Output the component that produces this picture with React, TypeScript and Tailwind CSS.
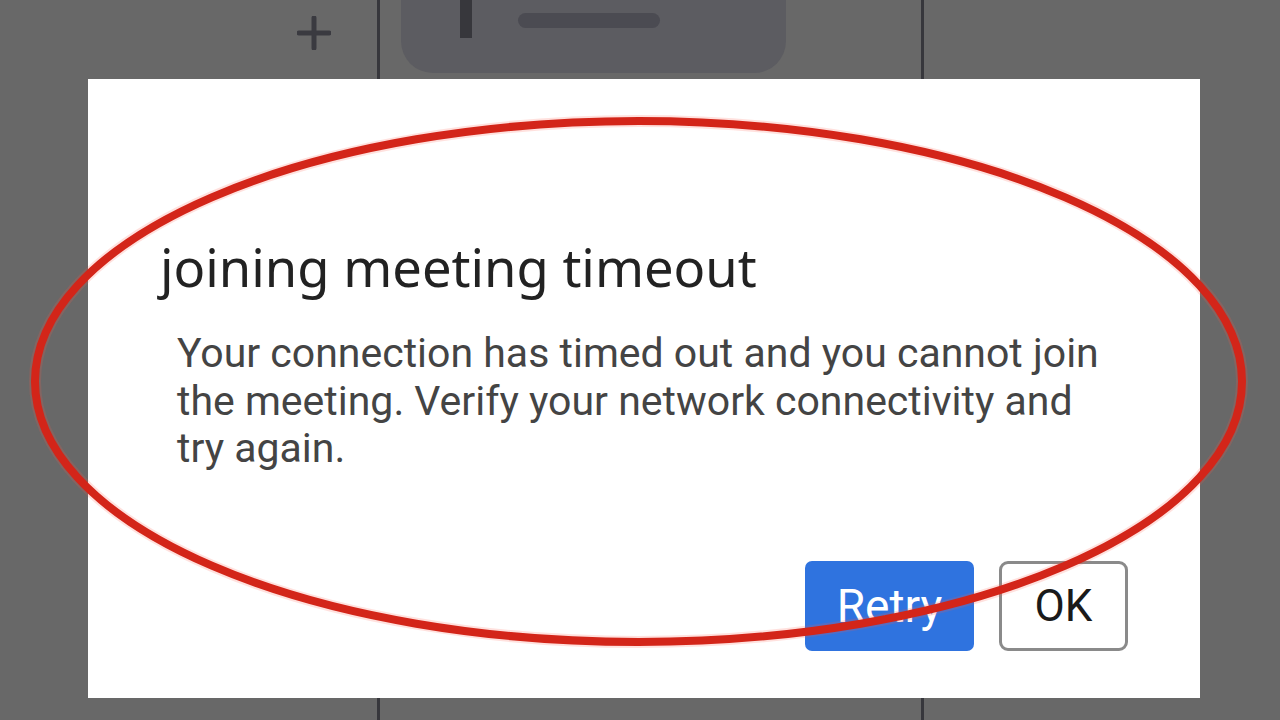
export default function App() {
  return (
    <div className="relative h-[720px] w-[1280px] overflow-hidden bg-[#686868]">
      {/* app behind the modal */}
      <div className="flex h-full">
        <div className="flex w-[377px] justify-end pr-[46px] pt-[16px]">
          <svg width="34" height="34" viewBox="0 0 34 34" className="text-[#3a3a40]">
            <path d="M17 2v30M2 17h30" stroke="currentColor" strokeWidth="5" strokeLinecap="round" />
          </svg>
        </div>
        <div className="w-[3px] bg-[#37373c]" />
        <div className="w-[541px] pl-[21px]">
          <div className="relative -mt-[40px] h-[113px] w-[385px] rounded-[32px] bg-[#5c5c61]">
            <div className="absolute left-[59px] top-0 h-[78px] w-[12px] bg-[#37373c]" />
            <div className="absolute left-[117px] top-[53px] h-[15px] w-[142px] rounded-full bg-[#4b4b52]" />
          </div>
        </div>
        <div className="w-[3px] bg-[#37373c]" />
        <div className="flex-1" />
      </div>

      {/* modal */}
      <div
        className="absolute left-[88px] top-[79px] flex h-[619px] w-[1112px] flex-col bg-white pl-[72px] pr-[72px] pt-[158px]"
        style={{ fontFamily: "Roboto, 'Noto Sans', sans-serif" }}
      >
        <h1
          className="text-[52.5px] leading-[60px] text-[#222222]"
          style={{ fontFamily: "'Noto Sans', sans-serif" }}
        >
          joining meeting timeout
        </h1>
        <p className="mt-[33px] w-[950px] pl-[17px] text-[41px] leading-[47.5px] text-[#444444]">
          Your connection has timed out and you cannot join the meeting. Verify your network connectivity and try again.
        </p>
        <div className="mt-auto mb-[47px] flex justify-end gap-[25px]">
          <button className="h-[90px] w-[169px] rounded-[7px] bg-[#2f73df] text-[46px] text-white">Retry</button>
          <button className="h-[90px] w-[129px] rounded-[9px] border-[3px] border-[#8a8a8a] bg-white text-[44px] text-[#1a1a1a]">
            OK
          </button>
        </div>
      </div>

      {/* red annotation ellipse */}
      <svg className="pointer-events-none absolute inset-0" width="1280" height="720" viewBox="0 0 1280 720">
        <ellipse cx="638.5" cy="381.5" rx="603.5" ry="260.5" fill="none" stroke="#ff5a4a" strokeOpacity="0.18" strokeWidth="12" />
        <ellipse cx="638.5" cy="381.5" rx="603.5" ry="260.5" fill="none" stroke="#d32519" strokeWidth="8" />
      </svg>
    </div>
  );
}
